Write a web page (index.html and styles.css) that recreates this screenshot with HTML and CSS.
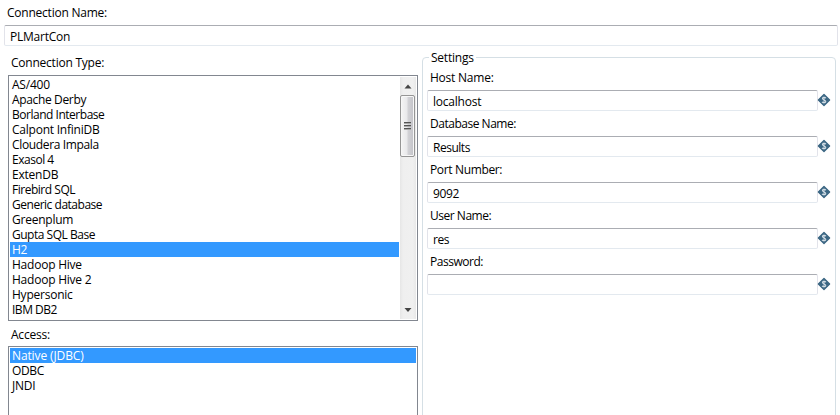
FILE: index.html
```html
<!DOCTYPE html>
<html lang="en">
<head>
<meta charset="utf-8">
<title>Database Connection</title>
<link rel="stylesheet" href="styles.css">
</head>
<body>
<svg class="defs" aria-hidden="true">
  <symbol id="variable" viewBox="0 0 12 12">
    <path d="M6 .4 11.6 6 6 11.6 .4 6Z" fill="#3b6683" stroke="#3b6683" stroke-width="1.3" stroke-linejoin="round"/>
    <path d="M7.9 4.2C7.2 3 4.4 3 4.4 4.6S7.8 6 7.8 7.5 4.8 9 4.1 7.9M6 2.5V9.5" fill="none" stroke="#d2dde5" stroke-width="1.1"/>
  </symbol>
</svg>
<div class="dialog">
  <label class="name-label">Connection Name:</label>
  <div class="input name-input">PLMartCon</div>
  <div class="columns">
    <div class="left">
      <div class="list-label">Connection Type:</div>
      <div class="listbox types">
        <ul class="items">
          <li>AS/400</li>
          <li class="snug">Apache Derby</li>
          <li class="tight">Borland Interbase</li>
          <li>Calpont InfiniDB</li>
          <li class="snug">Cloudera Impala</li>
          <li class="tight">Exasol 4</li>
          <li>ExtenDB</li>
          <li class="tight">Firebird SQL</li>
          <li class="tight">Generic database</li>
          <li>Greenplum</li>
          <li class="tight">Gupta SQL Base</li>
          <li class="selected">H2</li>
          <li>Hadoop Hive</li>
          <li>Hadoop Hive 2</li>
          <li>Hypersonic</li>
          <li class="tight">IBM DB2</li>
        </ul>
        <div class="scrollbar">
          <svg class="arrow" viewBox="0 0 16 17"><path d="M8 7 11.5 11H4.5Z" fill="#444"/></svg>
          <div class="thumb"><i></i><i></i><i></i></div>
          <svg class="arrow down" viewBox="0 0 16 17"><path d="M4.5 6.5H11.5L8 10.5Z" fill="#444"/></svg>
        </div>
      </div>
      <div class="list-label access-label">Access:</div>
      <div class="listbox access">
        <ul class="items">
          <li class="selected loose">Native (JDBC)</li>
          <li class="snug">ODBC</li>
          <li>JNDI</li>
        </ul>
      </div>
    </div>
    <div class="settings">
      <div class="legend">Settings</div>
      <div class="field"><label>Host Name:</label><div class="row"><div class="input">localhost</div><svg class="var"><use href="#variable"/></svg></div></div>
      <div class="field"><label class="tight">Database Name:</label><div class="row"><div class="input tight">Results</div><svg class="var"><use href="#variable"/></svg></div></div>
      <div class="field"><label class="snug">Port Number:</label><div class="row"><div class="input snug">9092</div><svg class="var"><use href="#variable"/></svg></div></div>
      <div class="field"><label class="tight">User Name:</label><div class="row"><div class="input tight">res</div><svg class="var"><use href="#variable"/></svg></div></div>
      <div class="field"><label class="tight">Password:</label><div class="row"><div class="input"></div><svg class="var"><use href="#variable"/></svg></div></div>
    </div>
  </div>
</div>
</body>
</html>
```

FILE: styles.css
```css
* { box-sizing: border-box; }
body {
  margin: 0;
  background: #fff;
  color: #000;
  font: 12px/15px "Open Sans", "Noto Sans", sans-serif;
  letter-spacing: -0.23px;
  white-space: nowrap;
}
.tight { letter-spacing: -0.48px; }
.snug { letter-spacing: -0.35px; }
.loose { letter-spacing: -0.12px; }
.defs { display: none; }
.dialog {
  width: 840px;
  height: 415px;
  overflow: hidden;
  display: flex;
  flex-direction: column;
}
.name-label { height: 25px; padding: 5px 0 0 7px; }
.input {
  height: 21px;
  border: 1px solid #e2e3ea;
  border-top-color: #abadb3;
  border-bottom-color: #e3e9ef;
  border-radius: 2px;
  padding: 3px 5px 0;
}
.name-input { flex: none; width: 834px; margin-left: 4px; }
.columns { display: flex; flex: 1; padding-left: 8px; min-height: 0; }
.left { width: 410px; margin-right: 4px; flex: none; }
.list-label { height: 29px; padding: 9px 0 0 3px; }
.access-label { height: 25px; padding-top: 6px; }
.listbox { border: 1px solid #828790; padding: 1px; display: flex; }
.types { height: 246px; }
.access { height: 90px; }
.items { list-style: none; margin: 0; padding: 0; flex: 1; }
.items li { height: 15px; padding-left: 2px; }
.items .selected { background: #3399ff; color: #fff; }
.scrollbar {
  width: 16px;
  margin-left: 1px;
  background: linear-gradient(90deg, #e6e6e6, #efefef 20%, #f0f0f0 80%, #e8e8e8);
  display: flex;
  flex-direction: column;
}
.arrow { width: 16px; height: 18px; flex: none; }
.down { margin-top: auto; }
.thumb {
  height: 62px;
  width: 15px;
  border: 1px solid #959595;
  border-radius: 2px;
  background: linear-gradient(90deg, #f5f5f5, #e9e9eb 45%, #d2d2d6 55%, #c2c2c8);
  box-shadow: inset 0 0 0 1px #f7f7f7;
  display: flex;
  flex-direction: column;
  align-items: center;
  justify-content: center;
  gap: 1px;
}
.thumb i { width: 7px; height: 2px; background: #555; border-bottom: 1px solid #aaa; }
.settings {
  width: 414px;
  height: 380px;
  margin-top: 11px;
  border: 1px solid #d5dfe5;
  border-radius: 4px;
  padding: 0 4px;
}
.legend {
  width: 47px;
  height: 15px;
  margin: -8px 0 0 2px;
  padding-left: 2px;
  background: #fff;
}
.field { height: 46px; padding-top: 5px; }
.field label { display: block; height: 20px; padding-left: 3px; }
.row { display: flex; align-items: center; height: 21px; }
.row .input { width: 391px; flex: none; }
.var { width: 12px; height: 12px; margin-top: -1px; overflow: visible; }
.var use { overflow: visible; }
#variable { overflow: visible; }
```
